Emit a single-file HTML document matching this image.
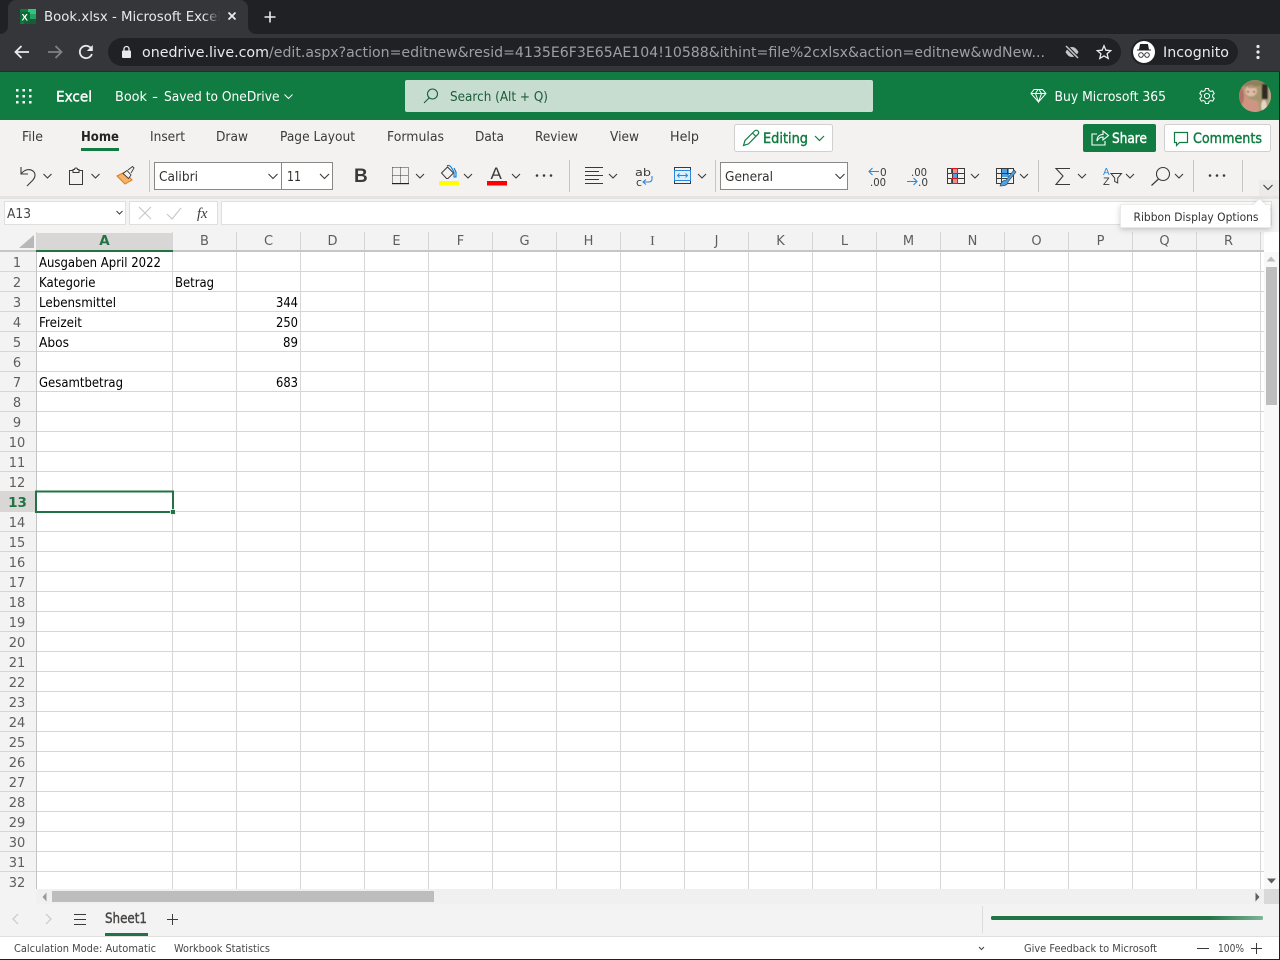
<!DOCTYPE html>
<html lang="en"><head><meta charset="utf-8"><title>Book.xlsx - Microsoft Excel</title>
<style>
html,body{margin:0;padding:0;background:#fff;width:1280px;height:960px;overflow:hidden}
svg{display:block;font-family:"DejaVu Sans",sans-serif}
text{white-space:pre}
.r{font-size:13px;fill:#3b3a39}
.c{font-size:13px;fill:#000}
.h{font-size:13px;fill:#605e5c;text-anchor:middle}
.s{font-size:11px;fill:#484644}
.cv{fill:none;stroke:#3b3a39;stroke-width:1.1}
.ln{fill:none;stroke:#3b3a39;stroke-width:1}
.g{fill:#fff}
.sb{stroke-width:.4}
</style></head><body>
<svg width="1280" height="960" viewBox="0 0 1280 960" xmlns="http://www.w3.org/2000/svg">
<defs>
<pattern id="gc" x="172" y="252" width="64" height="20" patternUnits="userSpaceOnUse"><rect width="1" height="20" fill="#d6d6d6"/><rect y="19" width="64" height="1" fill="#d6d6d6"/></pattern>
<pattern id="gh" x="0" y="252" width="64" height="20" patternUnits="userSpaceOnUse"><rect y="19" width="64" height="1" fill="#d6d6d6"/></pattern>
<pattern id="gv" x="172" y="232" width="64" height="20" patternUnits="userSpaceOnUse"><rect width="1" height="20" fill="#d6d6d6"/></pattern>
<linearGradient id="fd" x1="0" x2="1"><stop offset="0" stop-color="#35363a" stop-opacity="0"/><stop offset="1" stop-color="#35363a"/></linearGradient>
<linearGradient id="pb" x1="0" x2="1"><stop offset="0" stop-color="#217346"/><stop offset=".8" stop-color="#217346"/><stop offset="1" stop-color="#7fb397"/></linearGradient>
<filter id="bl" x="-30%" y="-30%" width="160%" height="160%"><feGaussianBlur stdDeviation=".8"/></filter>
<filter id="sh" x="-10%" y="-30%" width="120%" height="170%"><feDropShadow dx="0" dy="2" stdDeviation="3" flood-color="#000" flood-opacity=".2"/></filter>
<clipPath id="av"><circle cx="1255" cy="96" r="16"/></clipPath>
</defs>

<!-- browser chrome -->
<rect width="1280" height="72" fill="#202124"/>
<rect y="34" width="1280" height="38" fill="#35363a"/>
<path d="M0 34H0a8 8 0 0 0 8-8V8a8 8 0 0 1 8-8H240a8 8 0 0 1 8 8V26a8 8 0 0 0 8 8Z" fill="#35363a"/>
<rect x="20" y="9" width="16" height="15" rx="1" fill="#107c41"/>
<rect x="28" y="9" width="8" height="5" fill="#33c481"/><rect x="28" y="14" width="8" height="5" fill="#21a366"/><rect x="24" y="19" width="12" height="5" fill="#185c37"/>
<rect x="20" y="12" width="10" height="10" rx="1" fill="#0c6a37"/>
<text x="21.500" y="20.500" font-size="9.500" font-weight="700" fill="#fff" font-family="Liberation Sans">X</text>
<text x="44" y="21" font-size="13" fill="#e8eaed" textLength="177" lengthAdjust="spacingAndGlyphs">Book.xlsx - Microsoft Excel</text>
<rect x="204" y="6" width="16" height="22" fill="url(#fd)"/>
<path d="M228.500 12.500l7 7m0-7l-7 7" stroke="#e8eaed" stroke-width="1.800" fill="none"/>
<path d="M270 11.500v11M264.500 17h11" stroke="#e8eaed" stroke-width="1.600" fill="none"/>

<path d="M29 52H16M21.500 46l-6 6 6 6" fill="none" stroke="#e8eaed" stroke-width="1.800"/>
<path d="M61 52H48M55.500 46l6 6-6 6" fill="none" stroke="#7f8185" stroke-width="1.800"/>
<path d="M91.500 49a6.200 6.200 0 1 0 .4 5" fill="none" stroke="#e8eaed" stroke-width="1.800"/><path d="M92.800 45v6h-6z" fill="#e8eaed"/>
<rect x="108" y="38" width="1013" height="28" rx="14" fill="#202124"/>
<rect x="122" y="50.500" width="9" height="7.500" rx="1" fill="#e8eaed"/><path d="M124 51v-2a2.500 2.500 0 0 1 5 0v2" fill="none" stroke="#e8eaed" stroke-width="1.300"/>
<text x="142" y="57" font-size="14.500" fill="#e8eaed" textLength="127" lengthAdjust="spacingAndGlyphs">onedrive.live.com</text>
<text x="269" y="57" font-size="14.500" fill="#9aa0a6" textLength="776" lengthAdjust="spacingAndGlyphs">/edit.aspx?action=editnew&amp;resid=4135E6F3E65AE104!10588&amp;ithint=file%2cxlsx&amp;action=editnew&amp;wdNew...</text>
<path d="M1065.500 52c2-3.500 4-5 6.500-5s4.500 1.500 6.500 5c-2 3.500-4 5-6.500 5s-4.500-1.500-6.500-5z" fill="#c4c7c5"/><circle cx="1072" cy="52" r="1.800" fill="#202124"/><path d="M1066.500 46.500l11 11" stroke="#202124" stroke-width="3.500"/><path d="M1066 46l12 12" stroke="#c4c7c5" stroke-width="1.500"/>
<path d="M1104 45.800l1.900 4.400 4.800.4-3.600 3.100 1.100 4.700-4.200-2.500-4.200 2.500 1.100-4.700-3.600-3.100 4.800-.4z" fill="none" stroke="#e8eaed" stroke-width="1.300"/>
<rect x="1131" y="39" width="107" height="26" rx="13" fill="#202124"/>
<circle cx="1144" cy="52" r="11" fill="#fff"/>
<path d="M1139.500 49.500l1-5h7l1 5zM1137 50h14" fill="#202124" stroke="#202124" stroke-width="1"/><circle cx="1141" cy="55" r="2.300" fill="none" stroke="#202124" stroke-width=".9"/><circle cx="1147" cy="55" r="2.300" fill="none" stroke="#202124" stroke-width=".9"/>
<text x="1163" y="57" font-size="14.500" fill="#e8eaed" textLength="66" lengthAdjust="spacingAndGlyphs">Incognito</text>
<circle cx="1258" cy="46.500" r="1.600" fill="#e8eaed"/><circle cx="1258" cy="52" r="1.600" fill="#e8eaed"/><circle cx="1258" cy="57.500" r="1.600" fill="#e8eaed"/>
<rect y="71" width="1280" height="1" fill="#2a2b2e"/>

<!-- green app bar -->
<rect y="72" width="1280" height="48" fill="#107c41"/>
<g fill="#fff"><rect x="16" y="89" width="2.500" height="2.500"/><rect x="22.500" y="89" width="2.500" height="2.500"/><rect x="29" y="89" width="2.500" height="2.500"/><rect x="16" y="95" width="2.500" height="2.500"/><rect x="22.500" y="95" width="2.500" height="2.500"/><rect x="29" y="95" width="2.500" height="2.500"/><rect x="16" y="101" width="2.500" height="2.500"/><rect x="22.500" y="101" width="2.500" height="2.500"/><rect x="29" y="101" width="2.500" height="2.500"/></g>
<text x="56" y="101.500" font-size="14.500" class="g sb" stroke="#fff" textLength="36" lengthAdjust="spacingAndGlyphs">Excel</text>
<text x="115" y="101" font-size="13.500" class="g" textLength="32" lengthAdjust="spacingAndGlyphs">Book</text>
<text x="152" y="101" font-size="13.500" class="g" textLength="6" lengthAdjust="spacingAndGlyphs">-</text>
<text x="164" y="101" font-size="13.500" class="g" textLength="115.500" lengthAdjust="spacingAndGlyphs">Saved to OneDrive</text>
<path d="M284.500 94.500l4 4 4-4" fill="none" stroke="#fff" stroke-width="1"/>
<rect x="405" y="80" width="468" height="32" rx="2" fill="#c7ddd0"/>
<circle cx="432.500" cy="94" r="5" fill="none" stroke="#1c5b38" stroke-width="1.100"/><path d="M429 98l-5 5" stroke="#1c5b38" stroke-width="1.100"/>
<text x="450" y="101" font-size="13.500" fill="#1c5b38" textLength="98" lengthAdjust="spacingAndGlyphs">Search (Alt + Q)</text>
<path d="M1034 89.500h8.500l3.500 4-7.500 8.500-7.500-8.500zM1031 93.500h15M1035.500 93.500l3 8.500 3-8.500-2.500-4h-1z" fill="none" stroke="#fff" stroke-width="1"/>
<text x="1054.500" y="101" font-size="13.500" class="g" textLength="111.500" lengthAdjust="spacingAndGlyphs">Buy Microsoft 365</text>
<circle cx="1207" cy="96" r="2.600" fill="none" stroke="#fff" stroke-width="1"/>
<path d="M1205.500 88.500h3l.5 2 1.700 1 2-.6 1.500 2.600-1.500 1.500v2l1.500 1.500-1.500 2.600-2-.6-1.700 1-.5 2h-3l-.5-2-1.700-1-2 .6-1.500-2.600 1.500-1.500v-2l-1.500-1.500 1.500-2.600 2 .6 1.700-1z" fill="none" stroke="#fff" stroke-width="1"/>
<g clip-path="url(#av)"><rect x="1239" y="80" width="32" height="32" fill="#a5966f"/>
<g filter="url(#bl)"><rect x="1239" y="80" width="32" height="6" fill="#8f815f"/><rect x="1262" y="84" width="6" height="15" fill="#2e2a22"/><rect x="1268" y="84" width="4" height="20" fill="#b5a888"/><ellipse cx="1251" cy="91" rx="6" ry="5.500" fill="#e0bda8"/><path d="M1243 88l3 1-1 6 5 4 8 2 2 12h-18l-2-12z" fill="#cf9583"/><ellipse cx="1241.500" cy="96" rx="2.500" ry="8" fill="#b06f62"/><ellipse cx="1264" cy="106" rx="3" ry="6" fill="#e6d5c6"/><rect x="1247" y="91" width="2" height="1.500" fill="#5a3d38"/><rect x="1253" y="91" width="2" height="1.500" fill="#5a3d38"/><rect x="1248" y="86" width="8" height="2" fill="#b58c6c"/></g></g>

<!-- ribbon -->
<rect y="120" width="1280" height="77" fill="#f3f2f1"/>
<text x="22" y="141" class="r" textLength="21" lengthAdjust="spacingAndGlyphs">File</text>
<text x="81" y="141" class="r" font-weight="700" textLength="38" lengthAdjust="spacingAndGlyphs" style="fill:#252423">Home</text>
<text x="150" y="141" class="r" textLength="35" lengthAdjust="spacingAndGlyphs">Insert</text>
<text x="216" y="141" class="r" textLength="32" lengthAdjust="spacingAndGlyphs">Draw</text>
<text x="280" y="141" class="r" textLength="75" lengthAdjust="spacingAndGlyphs">Page Layout</text>
<text x="387" y="141" class="r" textLength="57" lengthAdjust="spacingAndGlyphs">Formulas</text>
<text x="475" y="141" class="r" textLength="29" lengthAdjust="spacingAndGlyphs">Data</text>
<text x="535" y="141" class="r" textLength="43" lengthAdjust="spacingAndGlyphs">Review</text>
<text x="610" y="141" class="r" textLength="29" lengthAdjust="spacingAndGlyphs">View</text>
<text x="670" y="141" class="r" textLength="29" lengthAdjust="spacingAndGlyphs">Help</text>
<rect x="81" y="148" width="38" height="3" fill="#107c41"/>
<rect x="734.500" y="124.500" width="98" height="27" rx="2" fill="#fff" stroke="#d2d0ce"/>
<path d="M743.500 145.500l1.500-5 9.500-9.500c1-1 2.500-1 3.500 0s.8 2.300 0 3.200l-9.500 9.700zM752.500 133l3.800 3.800" fill="none" stroke="#107c41" stroke-width="1.200"/>
<text x="763" y="143" font-size="13.800" fill="#107c41" stroke="#107c41" class="sb" textLength="45" lengthAdjust="spacingAndGlyphs">Editing</text>
<path d="M815 136l4.500 4.500 4.500-4.500" fill="none" stroke="#107c41" stroke-width="1.200"/>
<rect x="1083" y="124" width="73" height="28" rx="2" fill="#107c41"/>
<path d="M1097 134h-5v11h13v-4M1097 141c0-4.500 2.500-6.500 6-6.500v-3.500l5.500 4.500-5.500 4.500v-3c-2.500 0-4.500 1-6 4z" fill="none" stroke="#fff" stroke-width="1.100"/>
<text x="1112" y="143" font-size="13.800" fill="#fff" stroke="#fff" class="sb" textLength="35" lengthAdjust="spacingAndGlyphs">Share</text>
<rect x="1164.500" y="124.500" width="106" height="27" rx="2" fill="#fff" stroke="#d2d0ce"/>
<path d="M1174.500 132.500h13v10h-8l-3 3v-3h-2z" fill="none" stroke="#107c41" stroke-width="1.200"/>
<text x="1193" y="143" font-size="13.800" fill="#107c41" stroke="#107c41" class="sb" textLength="69" lengthAdjust="spacingAndGlyphs">Comments</text>

<g fill="#c8c6c4"><rect x="149" y="160" width="1" height="32"/><rect x="569" y="160" width="1" height="32"/><rect x="715" y="160" width="1" height="32"/><rect x="1038" y="160" width="1" height="32"/><rect x="1193" y="160" width="1" height="32"/><rect x="1242" y="160" width="1" height="32"/></g>

<!-- undo -->
<path d="M21 167v7h7M21 174c3-4 8-6 12-3 3.500 3 2 7-1 10l-5 5" fill="none" stroke="#3b3a39" stroke-width="1.100"/>
<path class="cv" d="M43.500 174l4 4 4-4"/>
<!-- clipboard -->
<path class="ln" d="M73 170.500h-3.500v14h13v-14H79M73 172.500v-3h1.500c0-2 3-2 3 0H79v3z"/>
<path class="cv" d="M91.500 174l4 4 4-4"/>
<!-- painter -->
<path d="M117 176l8-4 7 8-7 4z" fill="#f7b267" stroke="#e07b14" stroke-width="1"/>
<path d="M123 173.500l4-3 4 4.500-2.500 3.500zM128 170l4.500-3.500 1.500 1.500-3 5" fill="#f3f2f1" stroke="#3b3a39" stroke-width=".9"/>
<!-- font -->
<rect x="154.500" y="162.500" width="127" height="27" fill="#fff" stroke="#8a8886"/>
<rect x="281.500" y="162.500" width="51" height="27" fill="#fff" stroke="#8a8886"/>
<text x="159" y="181" font-size="13.500" fill="#323130" textLength="39" lengthAdjust="spacingAndGlyphs">Calibri</text>
<text x="287" y="181" font-size="13.500" fill="#323130" textLength="14" lengthAdjust="spacingAndGlyphs">11</text>
<path class="cv" d="M268.500 174l4.500 4.500 4.500-4.500M320 174l4.500 4.500 4.500-4.500"/>
<text x="354" y="182" font-family="Liberation Sans" font-weight="700" font-size="19" fill="#3b3a39">B</text>
<!-- borders -->
<path d="M392.500 167.500h16M392.500 175.500h16M392.500 167.500v16M400.500 167.500v16M408.500 167.500v16" fill="none" stroke="#333" stroke-width="1" stroke-dasharray="1 1"/>
<rect x="392" y="183" width="17" height="1.200" fill="#222"/>
<path class="cv" d="M416 174l4 4 4-4"/>
<!-- fill -->
<path d="M441.500 173l6-6 6 6-5.500 5.500h-1.500z" fill="none" stroke="#3b3a39"/><path d="M447 166c1-1 3-.5 4 1l3 5v5h2v-5l-2-4" fill="none" stroke="#0078d4" stroke-width="1.100"/>
<rect x="439" y="181" width="20" height="4.500" fill="#ffff00"/>
<path class="cv" d="M464 174l4 4 4-4"/>
<!-- font color -->
<text x="490.500" y="179" font-size="17" font-family="Liberation Sans" fill="#3b3a39">A</text>
<rect x="487" y="181" width="20" height="4.500" fill="#ff0000"/>
<path class="cv" d="M512 174l4 4 4-4"/>
<g fill="#3b3a39"><circle cx="537" cy="175.500" r="1.300"/><circle cx="544" cy="175.500" r="1.300"/><circle cx="551" cy="175.500" r="1.300"/></g>
<!-- align -->
<path class="ln" d="M585 167.500h18M585 171.500h14M585 175.500h18M585 179.500h14M585 183.500h18"/>
<path class="cv" d="M609 174l4 4 4-4"/>
<!-- wrap -->
<text x="635" y="176" font-size="11" fill="#3b3a39" textLength="16" lengthAdjust="spacingAndGlyphs">ab</text>
<text x="636" y="186" font-size="11" fill="#3b3a39">c</text>
<path d="M652 176v3c0 2-1.500 3-3.500 3h-5M646 179.500l-3 2.500 3 2.500" fill="none" stroke="#2b88d8" stroke-width="1.100"/>
<!-- merge -->
<rect x="674.500" y="167.500" width="16" height="16" fill="none" stroke="#3b3a39"/><rect x="674.500" y="170.500" width="16" height="10" fill="#def" stroke="#2b88d8"/>
<path d="M677.500 175.500h10M679.500 173.500l-2 2 2 2M685.500 173.500l2 2-2 2" fill="none" stroke="#2b88d8"/>
<path class="cv" d="M698 174l4 4 4-4"/>
<!-- number -->
<rect x="720.500" y="162.500" width="127" height="27" fill="#fff" stroke="#8a8886"/>
<text x="725" y="181" font-size="13.500" fill="#323130" textLength="48" lengthAdjust="spacingAndGlyphs">General</text>
<path class="cv" d="M835.500 174l4.500 4.500 4.500-4.500"/>
<path d="M869 171.500h10M872.500 168l-3.500 3.500 3.500 3.500" fill="none" stroke="#2b88d8" stroke-width="1.100"/>
<text x="880" y="176" font-size="10.500" fill="#3b3a39">0</text>
<text x="870" y="186" font-size="10.500" fill="#3b3a39" textLength="16" lengthAdjust="spacingAndGlyphs">.00</text>
<text x="911" y="176" font-size="10.500" fill="#3b3a39" textLength="16" lengthAdjust="spacingAndGlyphs">.00</text>
<path d="M907 181.500h10M913.500 178l3.500 3.500-3.500 3.500" fill="none" stroke="#2b88d8" stroke-width="1.100"/>
<text x="918" y="186" font-size="10.500" fill="#3b3a39">.0</text>
<!-- cond fmt -->
<rect x="952" y="168" width="5" height="5" fill="#f28b8b"/><rect x="952" y="173" width="5" height="5" fill="#4aa0e0"/><rect x="952" y="178" width="5" height="5" fill="#f28b8b"/>
<path d="M947.500 168.500h17v15h-17zM947.500 173.500h17M947.500 178.500h17M952.500 168.500v15M957.500 168.500v15" fill="none" stroke="#3b3a39"/>
<path d="M951.500 168.500h6v5h-6zM951.500 178.500h6v5h-6z" fill="none" stroke="#e81123"/>
<path class="cv" d="M971 174l4 4 4-4"/>
<!-- table -->
<rect x="1001" y="169" width="8" height="8" fill="#4aa0e0"/>
<path d="M996.500 168.500h17v15h-17zM996.500 173.500h17M996.500 178.500h11M1001.500 168.500v15M1007.500 168.500v6" fill="none" stroke="#3b3a39"/>
<path d="M1000 186c1-4 3-6 6-6l8-10 2 2-8 10c0 3-4 4-8 4z" fill="#4aa0e0" stroke="#3b3a39" stroke-width=".6"/>
<path class="cv" d="M1020 174l4 4 4-4"/>
<!-- sigma -->
<path d="M1070 168.500h-14l7 7.500-7 8.500h14" fill="none" stroke="#3b3a39" stroke-width="1.100"/>
<path class="cv" d="M1078 174l4 4 4-4"/>
<!-- sort -->
<text x="1103" y="175" font-size="10" fill="#2b88d8" font-family="Liberation Sans">A</text>
<text x="1103" y="185" font-size="11" fill="#3b3a39" font-family="Liberation Sans">Z</text>
<path d="M1111 173.500h10.500l-3.800 4.500v5l-3-1.500V178z" fill="none" stroke="#3b3a39"/>
<path class="cv" d="M1126 174l4 4 4-4"/>
<!-- find -->
<circle cx="1163" cy="174" r="6.500" fill="none" stroke="#3b3a39" stroke-width="1.100"/><path d="M1158.500 179l-7 6.500" stroke="#3b3a39" stroke-width="1.200"/>
<path class="cv" d="M1175 174l4 4 4-4"/>
<g fill="#3b3a39"><circle cx="1210" cy="175.500" r="1.300"/><circle cx="1217" cy="175.500" r="1.300"/><circle cx="1224" cy="175.500" r="1.300"/></g>
<rect x="1259" y="180" width="20" height="17" fill="#edebe9"/>
<path class="cv" d="M1263.500 185l4.500 4.500 4.500-4.500"/>

<!-- formula bar -->
<rect y="197" width="1280" height="35" fill="#f3f3f3"/>
<rect y="196" width="1279" height="3" fill="#e4e3e2"/>
<rect x="4.500" y="201.500" width="121" height="23" fill="#fff" stroke="#e1dfdd"/>
<text x="7" y="218" font-size="13" fill="#484644" textLength="24" lengthAdjust="spacingAndGlyphs">A13</text>
<path d="M116.500 211l3 3 3-3" fill="none" stroke="#3b3a39" stroke-width="1"/>
<rect x="129.500" y="201.500" width="88" height="23" fill="#fff" stroke="#e1dfdd"/>
<path d="M139 207l12 12m0-12l-12 12" stroke="#c8c6c4" fill="none" stroke-width="1.100"/>
<path d="M167 214l5 5 9-11" stroke="#c8c6c4" fill="none" stroke-width="1.100"/>
<text x="197" y="218" font-size="14.500" font-style="italic" font-family="Liberation Serif" fill="#3b3a39">fx</text>
<rect x="221.500" y="201.500" width="1050" height="23" fill="#fff" stroke="#e1dfdd"/>
<circle cx="1270" cy="209" r=".9" fill="#3b3a39"/>

<!-- column header -->
<rect y="232" width="1264" height="19" fill="#f3f3f3"/>
<rect x="36" y="233" width="137" height="17" fill="#d8d7d5"/>
<rect x="172" y="232" width="1089" height="19" fill="url(#gv)"/>
<rect x="36" y="232" width="1" height="19" fill="#d6d6d6"/>
<path d="M34 235v13H19z" fill="#b8b8b8"/>
<rect x="0" y="250" width="1264" height="2" fill="#c6c6c6"/>
<rect x="36" y="250" width="137" height="2" fill="#217346"/>
<text x="104.500" y="245" font-size="13.500" font-weight="700" fill="#217346" text-anchor="middle">A</text>
<text x="204.500" y="245" class="h">B</text><text x="268.500" y="245" class="h">C</text><text x="332.500" y="245" class="h">D</text><text x="396.500" y="245" class="h">E</text><text x="460.500" y="245" class="h">F</text><text x="524.500" y="245" class="h">G</text><text x="588.500" y="245" class="h">H</text><text x="652.500" y="245" class="h" font-family="Liberation Serif" style="font-size:14px">I</text><text x="716.500" y="245" class="h">J</text><text x="780.500" y="245" class="h">K</text><text x="844.500" y="245" class="h">L</text><text x="908.500" y="245" class="h">M</text><text x="972.500" y="245" class="h">N</text><text x="1036.500" y="245" class="h">O</text><text x="1100.500" y="245" class="h">P</text><text x="1164.500" y="245" class="h">Q</text><text x="1228.500" y="245" class="h">R</text>

<!-- grid -->
<rect y="252" width="1264" height="637" fill="#fff"/>
<rect y="252" width="36" height="637" fill="#f3f3f3"/>
<rect y="252" width="1264" height="637" fill="url(#gh)"/>
<rect x="172" y="252" width="1089" height="637" fill="url(#gc)"/>
<rect x="36" y="252" width="1" height="637" fill="#c4c4c4"/>
<rect x="0" y="492" width="36" height="19" fill="#d8d7d5"/>

<g>
<text x="17" y="267" class="h">1</text><text x="17" y="287" class="h">2</text><text x="17" y="307" class="h">3</text><text x="17" y="327" class="h">4</text><text x="17" y="347" class="h">5</text><text x="17" y="367" class="h">6</text><text x="17" y="387" class="h">7</text><text x="17" y="407" class="h">8</text><text x="17" y="427" class="h">9</text><text x="17" y="447" class="h">10</text><text x="17" y="467" class="h">11</text><text x="17" y="487" class="h">12</text>
<text x="17.500" y="507" font-size="13.500" font-weight="700" fill="#217346" text-anchor="middle">13</text>
<text x="17" y="527" class="h">14</text><text x="17" y="547" class="h">15</text><text x="17" y="567" class="h">16</text><text x="17" y="587" class="h">17</text><text x="17" y="607" class="h">18</text><text x="17" y="627" class="h">19</text><text x="17" y="647" class="h">20</text><text x="17" y="667" class="h">21</text><text x="17" y="687" class="h">22</text><text x="17" y="707" class="h">23</text><text x="17" y="727" class="h">24</text><text x="17" y="747" class="h">25</text><text x="17" y="767" class="h">26</text><text x="17" y="787" class="h">27</text><text x="17" y="807" class="h">28</text><text x="17" y="827" class="h">29</text><text x="17" y="847" class="h">30</text><text x="17" y="867" class="h">31</text><text x="17" y="887" class="h">32</text>
</g>

<text x="39" y="267" class="c" textLength="122" lengthAdjust="spacingAndGlyphs">Ausgaben April 2022</text>
<text x="39" y="287" class="c" textLength="56.500" lengthAdjust="spacingAndGlyphs">Kategorie</text>
<text x="175" y="287" class="c" textLength="39" lengthAdjust="spacingAndGlyphs">Betrag</text>
<text x="39" y="307" class="c" textLength="77" lengthAdjust="spacingAndGlyphs">Lebensmittel</text>
<text x="276" y="307" class="c" textLength="22" lengthAdjust="spacingAndGlyphs">344</text>
<text x="39" y="327" class="c" textLength="43" lengthAdjust="spacingAndGlyphs">Freizeit</text>
<text x="276" y="327" class="c" textLength="22" lengthAdjust="spacingAndGlyphs">250</text>
<text x="39" y="347" class="c" textLength="30" lengthAdjust="spacingAndGlyphs">Abos</text>
<text x="283" y="347" class="c" textLength="15" lengthAdjust="spacingAndGlyphs">89</text>
<text x="39" y="387" class="c" textLength="84" lengthAdjust="spacingAndGlyphs">Gesamtbetrag</text>
<text x="276" y="387" class="c" textLength="22" lengthAdjust="spacingAndGlyphs">683</text>

<!-- selection -->
<rect x="36" y="491.500" width="137" height="20.500" fill="none" stroke="#217346" stroke-width="2"/>
<rect x="170.500" y="509.500" width="5" height="5" fill="#217346" stroke="#fff" stroke-width=".8"/>

<!-- v scrollbar -->
<rect x="1264" y="252" width="15" height="637" fill="#f8f8f8"/>
<path d="M1271 256.500l4.500 5h-9z" fill="#bdbdbd"/>
<rect x="1266" y="267" width="11" height="138" fill="#bdbdbd"/>
<path d="M1267 878.500h9l-4.500 5z" fill="#605e5c"/>

<!-- h scrollbar -->
<rect y="889" width="1264" height="15" fill="#f3f3f3"/>
<rect x="36" y="889" width="1228" height="15" fill="#f0f0f0"/>
<rect x="1264" y="889" width="15" height="15" fill="#d9d9d9"/>
<path d="M46.500 892.500v9l-4-4.500z" fill="#9a9a9a"/>
<rect x="52" y="891" width="382" height="11" fill="#bdbdbd"/>
<path d="M1255.500 892.500v9l4-4.500z" fill="#605e5c"/>

<!-- sheet bar -->
<rect y="904" width="1279" height="32" fill="#f3f3f3"/>
<path d="M18 914l-5 5 5 5M46 914l5 5-5 5" fill="none" stroke="#c8c6c4" stroke-width="1.100"/>
<path d="M74 914.500h12M74 919.500h12M74 924.500h12" fill="none" stroke="#3b3a39" stroke-width="1"/>
<text x="105" y="923" font-size="14" fill="#484644" stroke="#484644" class="sb" textLength="42" lengthAdjust="spacingAndGlyphs">Sheet1</text>
<rect x="105" y="933" width="43" height="3" fill="#217346"/>
<path d="M172.500 914v11M167 919.500h11" fill="none" stroke="#3b3a39" stroke-width="1"/>
<rect x="982" y="906" width="1" height="27" fill="#dcdcdc"/>
<rect x="991" y="916" width="272" height="4" rx="1.500" fill="url(#pb)"/>

<!-- status bar -->
<rect y="936" width="1279" height="23" fill="#fff"/>
<rect y="936" width="1279" height="1" fill="#e1dfdd"/>
<text x="14" y="952" class="s" textLength="142" lengthAdjust="spacingAndGlyphs">Calculation Mode: Automatic</text>
<text x="174" y="952" class="s" textLength="96" lengthAdjust="spacingAndGlyphs">Workbook Statistics</text>
<path d="M979 947l2.500 2.500 2.500-2.500" fill="none" stroke="#484644" stroke-width="1.100"/>
<text x="1024" y="952" class="s" textLength="133" lengthAdjust="spacingAndGlyphs">Give Feedback to Microsoft</text>
<path d="M1197 948.500h12M1251 948.500h11M1256.500 943v11" fill="none" stroke="#3b3a39" stroke-width="1"/>
<text x="1218" y="952" class="s" textLength="26" lengthAdjust="spacingAndGlyphs">100%</text>

<!-- tooltip -->
<g filter="url(#sh)"><path d="M1120.500 204.500h133l6-6 6 6h5v23h-150z" fill="#fff" stroke="#e1dfdd" stroke-width=".6"/></g>
<text x="1133.500" y="221" font-size="11.500" fill="#323130" textLength="125" lengthAdjust="spacingAndGlyphs">Ribbon Display Options</text>

<!-- window edge -->
<rect x="1279" y="72" width="1" height="888" fill="#202124"/>
<rect y="959" width="1280" height="1" fill="#202124"/>
</svg>
</body></html>
